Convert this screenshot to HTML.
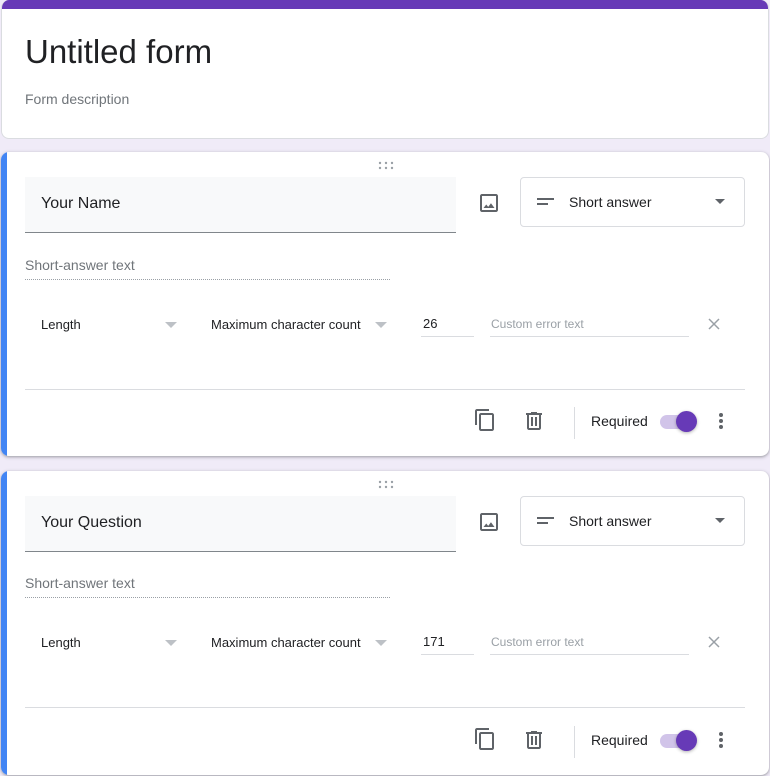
<!DOCTYPE html>
<html><head><meta charset="utf-8"><style>
*{box-sizing:border-box;margin:0;padding:0}
body{width:770px;height:776px;background:#f0ebf8;font-family:"Liberation Sans",Roboto,sans-serif;position:relative;overflow:hidden;color:#202124}
.a{position:absolute}
.head{left:1px;top:0;width:768px;height:139px;background:#fff;border-radius:8px;border:1px solid #dadce0;border-top:none;overflow:hidden}
.bar{left:0;top:0;width:100%;height:9px;background:#673ab7}
.card{left:1px;width:768px;height:304px;background:#fff;border-radius:8px;box-shadow:0 1px 2px rgba(60,64,67,.3),0 1px 3px 1px rgba(60,64,67,.15);overflow:hidden}
.blue{left:0;top:0;width:6px;height:100%;background:#4285f4}
.t13{font-size:13px;color:#202124}
</style></head><body>
<div class="a head"><div class="a bar"></div>
<div class="a" style="left:23px;top:33px;font-size:33px;color:#202124">Untitled form</div>
<div class="a" style="left:23px;top:91px;font-size:14px;color:#70757a">Form description</div>
</div>

<div class="a card" style="top:152px">
<div class="a blue"></div>
<svg class="a" style="left:377px;top:9px" width="16" height="9"><g fill="#9aa0a6"><circle cx="2" cy="2" r="1.2"/><circle cx="8" cy="2" r="1.2"/><circle cx="14" cy="2" r="1.2"/><circle cx="2" cy="7" r="1.2"/><circle cx="8" cy="7" r="1.2"/><circle cx="14" cy="7" r="1.2"/></g></svg>
<div class="a" style="left:24px;top:25px;width:431px;height:56px;background:#f8f9fa;border-bottom:1px solid #80868b"></div>
<div class="a" style="left:40px;top:43px;font-size:16px">Your Name</div>
<svg class="a" style="left:476px;top:39px" width="24" height="24" viewBox="0 0 24 24"><path fill="#5f6368" d="M19 3H5c-1.1 0-2 .9-2 2v14c0 1.1.9 2 2 2h14c1.1 0 2-.9 2-2V5c0-1.1-.9-2-2-2zm0 16H5V5h14v14zm-5.04-6.71l-2.75 3.54-1.96-2.36L6.5 17h11l-3.54-4.71z"/></svg>
<div class="a" style="left:519px;top:25px;width:225px;height:50px;border:1px solid #dadce0;border-radius:4px"></div>
<svg class="a" style="left:536px;top:45px" width="18" height="10"><rect x="0" y="1" width="17" height="2" fill="#5f6368"/><rect x="0" y="6" width="11" height="2" fill="#5f6368"/></svg>
<div class="a" style="left:568px;top:42px;font-size:14px">Short answer</div>
<svg class="a" style="left:714px;top:47px" width="12" height="6"><path d="M0 0h10L5 5z" fill="#5f6368"/></svg>
<div class="a" style="left:24px;top:105px;font-size:14px;color:#70757a">Short-answer text</div>
<div class="a" style="left:24px;top:127px;width:365px;border-bottom:1px dotted #9aa0a6"></div>
<div class="a t13" style="left:40px;top:165px">Length</div>
<svg class="a" style="left:164px;top:170px" width="14" height="7"><path d="M0 0h12L6 6z" fill="#bdc1c6"/></svg>
<div class="a t13" style="left:210px;top:165px">Maximum character count</div>
<svg class="a" style="left:374px;top:170px" width="14" height="7"><path d="M0 0h12L6 6z" fill="#bdc1c6"/></svg>
<div class="a t13" style="left:422px;top:164px">26</div>
<div class="a" style="left:420px;top:184px;width:53px;border-bottom:1px solid #dadce0"></div>
<div class="a" style="left:490px;top:165px;font-size:12px;color:#9aa0a6">Custom error text</div>
<div class="a" style="left:489px;top:184px;width:199px;border-bottom:1px solid #dadce0"></div>
<svg class="a" style="left:707px;top:166px" width="12" height="12"><path d="M1 1l10 10M11 1L1 11" stroke="#9aa0a6" stroke-width="1.5"/></svg>
<div class="a" style="left:24px;top:237px;width:720px;border-bottom:1px solid #dadce0"></div>
<svg class="a" style="left:472px;top:256px" width="24" height="24" viewBox="0 0 24 24"><path fill="#5f6368" d="M16 1H4c-1.1 0-2 .9-2 2v14h2V3h12V1zm3 4H8c-1.1 0-2 .9-2 2v14c0 1.1.9 2 2 2h11c1.1 0 2-.9 2-2V7c0-1.1-.9-2-2-2zm0 16H8V7h11v14z"/></svg>
<svg class="a" style="left:521px;top:257px" width="24" height="24" viewBox="0 0 24 24"><path fill="#5f6368" d="M15 4V3H9v1H4v2h1v13c0 1.1.9 2 2 2h10c1.1 0 2-.9 2-2V6h1V4h-5zm2 15H7V6h10v13zM9 8h2v9H9zm4 0h2v9h-2z"/></svg>
<div class="a" style="left:573px;top:255px;width:1px;height:32px;background:#dadce0"></div>
<div class="a" style="left:590px;top:261px;font-size:14px">Required</div>
<div class="a" style="left:659px;top:263px;width:36px;height:14px;border-radius:7px;background:#d1c4e9"></div>
<div class="a" style="left:675px;top:259px;width:21px;height:21px;border-radius:50%;background:#673ab7;box-shadow:0 1px 3px rgba(0,0,0,.3)"></div>
<svg class="a" style="left:717px;top:260px" width="6" height="18"><g fill="#5f6368"><circle cx="3" cy="3" r="2"/><circle cx="3" cy="9" r="2"/><circle cx="3" cy="15" r="2"/></g></svg>
</div>

<div class="a card" style="top:471px">
<div class="a blue"></div>
<svg class="a" style="left:377px;top:9px" width="16" height="9"><g fill="#9aa0a6"><circle cx="2" cy="2" r="1.2"/><circle cx="8" cy="2" r="1.2"/><circle cx="14" cy="2" r="1.2"/><circle cx="2" cy="7" r="1.2"/><circle cx="8" cy="7" r="1.2"/><circle cx="14" cy="7" r="1.2"/></g></svg>
<div class="a" style="left:24px;top:25px;width:431px;height:56px;background:#f8f9fa;border-bottom:1px solid #80868b"></div>
<div class="a" style="left:40px;top:43px;font-size:16px">Your Question</div>
<svg class="a" style="left:476px;top:39px" width="24" height="24" viewBox="0 0 24 24"><path fill="#5f6368" d="M19 3H5c-1.1 0-2 .9-2 2v14c0 1.1.9 2 2 2h14c1.1 0 2-.9 2-2V5c0-1.1-.9-2-2-2zm0 16H5V5h14v14zm-5.04-6.71l-2.75 3.54-1.96-2.36L6.5 17h11l-3.54-4.71z"/></svg>
<div class="a" style="left:519px;top:25px;width:225px;height:50px;border:1px solid #dadce0;border-radius:4px"></div>
<svg class="a" style="left:536px;top:45px" width="18" height="10"><rect x="0" y="1" width="17" height="2" fill="#5f6368"/><rect x="0" y="6" width="11" height="2" fill="#5f6368"/></svg>
<div class="a" style="left:568px;top:42px;font-size:14px">Short answer</div>
<svg class="a" style="left:714px;top:47px" width="12" height="6"><path d="M0 0h10L5 5z" fill="#5f6368"/></svg>
<div class="a" style="left:24px;top:104px;font-size:14px;color:#70757a">Short-answer text</div>
<div class="a" style="left:24px;top:126px;width:365px;border-bottom:1px dotted #9aa0a6"></div>
<div class="a t13" style="left:40px;top:164px">Length</div>
<svg class="a" style="left:164px;top:169px" width="14" height="7"><path d="M0 0h12L6 6z" fill="#bdc1c6"/></svg>
<div class="a t13" style="left:210px;top:164px">Maximum character count</div>
<svg class="a" style="left:374px;top:169px" width="14" height="7"><path d="M0 0h12L6 6z" fill="#bdc1c6"/></svg>
<div class="a t13" style="left:422px;top:163px">171</div>
<div class="a" style="left:420px;top:183px;width:53px;border-bottom:1px solid #dadce0"></div>
<div class="a" style="left:490px;top:164px;font-size:12px;color:#9aa0a6">Custom error text</div>
<div class="a" style="left:489px;top:183px;width:199px;border-bottom:1px solid #dadce0"></div>
<svg class="a" style="left:707px;top:165px" width="12" height="12"><path d="M1 1l10 10M11 1L1 11" stroke="#9aa0a6" stroke-width="1.5"/></svg>
<div class="a" style="left:24px;top:236px;width:720px;border-bottom:1px solid #dadce0"></div>
<svg class="a" style="left:472px;top:256px" width="24" height="24" viewBox="0 0 24 24"><path fill="#5f6368" d="M16 1H4c-1.1 0-2 .9-2 2v14h2V3h12V1zm3 4H8c-1.1 0-2 .9-2 2v14c0 1.1.9 2 2 2h11c1.1 0 2-.9 2-2V7c0-1.1-.9-2-2-2zm0 16H8V7h11v14z"/></svg>
<svg class="a" style="left:521px;top:257px" width="24" height="24" viewBox="0 0 24 24"><path fill="#5f6368" d="M15 4V3H9v1H4v2h1v13c0 1.1.9 2 2 2h10c1.1 0 2-.9 2-2V6h1V4h-5zm2 15H7V6h10v13zM9 8h2v9H9zm4 0h2v9h-2z"/></svg>
<div class="a" style="left:573px;top:255px;width:1px;height:32px;background:#dadce0"></div>
<div class="a" style="left:590px;top:261px;font-size:14px">Required</div>
<div class="a" style="left:659px;top:263px;width:36px;height:14px;border-radius:7px;background:#d1c4e9"></div>
<div class="a" style="left:675px;top:259px;width:21px;height:21px;border-radius:50%;background:#673ab7;box-shadow:0 1px 3px rgba(0,0,0,.3)"></div>
<svg class="a" style="left:717px;top:260px" width="6" height="18"><g fill="#5f6368"><circle cx="3" cy="3" r="2"/><circle cx="3" cy="9" r="2"/><circle cx="3" cy="15" r="2"/></g></svg>
</div>
</body></html>
